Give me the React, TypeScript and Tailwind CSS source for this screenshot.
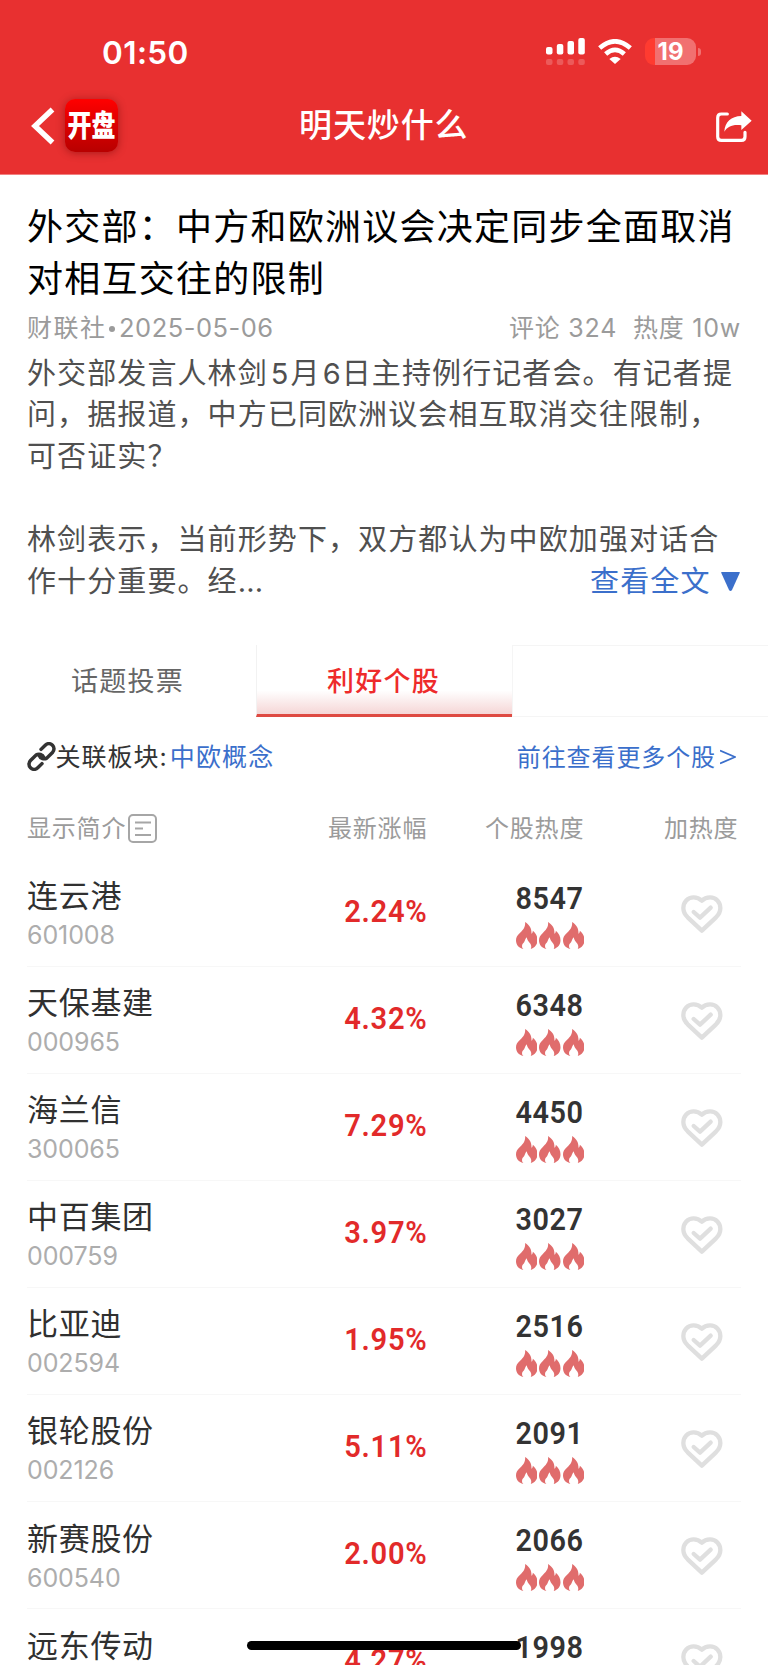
import React from "react";

type Stock = { name: string; code: string; change: string; heat: string };

const stocks: Stock[] = [
  { name: "连云港", code: "601008", change: "2.24%", heat: "8547" },
  { name: "天保基建", code: "000965", change: "4.32%", heat: "6348" },
  { name: "海兰信", code: "300065", change: "7.29%", heat: "4450" },
  { name: "中百集团", code: "000759", change: "3.97%", heat: "3027" },
  { name: "比亚迪", code: "002594", change: "1.95%", heat: "2516" },
  { name: "银轮股份", code: "002126", change: "5.11%", heat: "2091" },
  { name: "新赛股份", code: "600540", change: "2.00%", heat: "2066" },
  { name: "远东传动", code: "", change: "4.27%", heat: "1998" },
];

function Flame() {
  return (
    <svg viewBox="0 0 64 80" className="h-[27px] w-[21.5px]" fill="#e06c6c">
      <path d="M27 0C41 9 47 20 46 35C49 33 50 30 50 26C59 33 64 43 64 54C64 66 57 76 44 80C47 73 45 67 41 62C37 57 33 53 32 45C27 50 27 55 24 60C20 65 18 66 18 71C18 75 19 77 22 80C8 77 0 67 0 54C0 46 4 40 10 34C19 25 29 16 27 0Z" />
    </svg>
  );
}

function HeartCheck() {
  return (
    <svg viewBox="0 0 125 114" className="h-[38px] w-[41.7px]" fill="none" stroke="#dfdfdf" strokeWidth="13" strokeLinecap="round" strokeLinejoin="round">
      <path d="M62.5 17C54 9 46 7 38 7C20 7 7 21 7 39C7 50 12 59 20 67L62.5 107L105 67C113 59 118 50 118 39C118 21 105 7 87 7C78 7 70 9 62.5 17Z" />
      <path d="M38 51L57 68L89 38" />
    </svg>
  );
}

function StatusBar() {
  return (
    <div className="flex h-[84px] items-start justify-between pl-[102px] pr-[67px]">
      <span className="mt-[33px] text-[31.5px] font-[560] leading-[40px] tracking-[0.4px]">01:50</span>
      <div className="mt-[38px] flex h-[27px] items-start">
        <svg viewBox="0 0 39 27" className="h-[27px] w-[39px]" fill="#fff">
          <rect x="0" y="9" width="6.5" height="7.5" rx="2" />
          <rect x="10.8" y="6" width="6.5" height="10.5" rx="2" />
          <rect x="21.5" y="3" width="6.5" height="13.5" rx="2" />
          <rect x="32.3" y="0" width="6.5" height="16.5" rx="2" />
          <g opacity=".2">
            <rect x="0" y="21" width="6.5" height="6" rx="2" />
            <rect x="10.8" y="21" width="6.5" height="6" rx="2" />
            <rect x="21.5" y="21" width="6.5" height="6" rx="2" />
            <rect x="32.3" y="21" width="6.5" height="6" rx="2" />
          </g>
        </svg>
        <svg viewBox="0 0 102 75" className="ml-[13.5px] mt-px h-[25px] w-[34px]" fill="none" stroke="#fff" strokeWidth="14">
          <path d="M5 27Q51 -13 97 27" />
          <path d="M23 45Q51 20 79 45" />
          <path d="M34 60Q51 46 68 60L51 75Z" fill="#fff" stroke="none" />
        </svg>
        <div className="ml-[13px] flex h-[27px] w-[51px] items-center justify-center rounded-[9px] bg-[linear-gradient(90deg,#ff3b30_0_10px,#f17070_10px)] text-[24px] font-bold leading-[27px]">19</div>
        <div className="ml-[2px] mt-[9.5px] h-[8px] w-[3px] rounded-r-full bg-[#f17070]" />
      </div>
    </div>
  );
}

function NavBar() {
  return (
    <div className="flex h-[90px] items-start pl-[31px] pr-[16px]">
      <div className="flex w-[268px]">
        <svg viewBox="0 0 24 38" className="mt-[22.5px] h-[38px] w-[24px]" fill="none" stroke="#fff" strokeWidth="5.4">
          <path d="M21.5 2.5L4 19L21.5 35.5" />
        </svg>
        <div className="ml-[10px] mt-[15px] flex h-[53px] w-[53px] items-center justify-center rounded-[10px] bg-linear-to-b from-[#ff0000] to-[#b80000] shadow-[0_1px_8px_rgba(90,0,0,0.45)]">
          <span className="scale-y-[1.22] text-[24px] font-black leading-[30px]">开盘</span>
        </div>
      </div>
      <h1 className="mt-[17px] grow text-[33px] font-medium leading-[48px] tracking-[0.9px]">明天炒什么</h1>
      <svg viewBox="0 0 107 94" className="mt-[27px] h-[31.3px] w-[35.7px]" fill="none">
        <path d="M34 9H16Q5 9 5 20V77Q5 88 16 88H76Q87 88 87 77V64" stroke="#fff" strokeWidth="9.5" strokeLinecap="round" />
        <path d="M76 1L107 29L76 57V43C52 39 34 46 25 62C26 34 46 15 76 15Z" fill="#fff" />
      </svg>
    </div>
  );
}

function Article() {
  return (
    <section className="h-[470px] pl-[27px] pr-[27px] pt-[25.5px]">
      <h2 className="whitespace-nowrap text-[36px] leading-[52px] tracking-[1.25px] text-black">
        外交部：中方和欧洲议会决定同步全面取消
        <br />
        对相互交往的限制
      </h2>
      <div className="flex h-[48px] items-center justify-between whitespace-nowrap text-[25px] text-[#9b9b9b]">
        <div className="flex items-center">
          <span className="tracking-[1.5px]">财联社</span>
          <span className="ml-[2.5px] mr-[4px] size-[6px] rounded-full bg-[#9b9b9b]" />
          <span className="text-[25.5px] tracking-[0.5px]">2025-05-06</span>
        </div>
        <div className="flex tracking-[0.75px]">
          <span>评论 324</span>
          <span className="ml-[16px]">热度 10w</span>
        </div>
      </div>
      <div className="whitespace-nowrap text-[29px] leading-[41.7px] tracking-[1.1px] text-[#505050]">
        <p>
          外交部发言人林剑<span className="ml-[3px] mr-[1px]">5</span>月<span className="ml-[2px]">6</span>日主持例行记者会。有记者提
        </p>
        <p>问，据报道，中方已同欧洲议会相互取消交往限制，</p>
        <p>可否证实？</p>
        <p>&nbsp;</p>
        <p>林剑表示，当前形势下，双方都认为中欧加强对话合</p>
        <div className="flex justify-between">
          <p>作十分重要。经<span className="tracking-[0.2px]">...</span></p>
          <a className="flex items-start text-[#3b6fcb]">
            查看全文
            <svg viewBox="0 0 19 19" className="ml-[10px] mr-[1.5px] mt-[11px] size-[19px]" fill="#3b6fcb">
              <path d="M0.5 0H18.5Q19 0 18.7 1L11 18Q9.5 20 8 18L0.3 1Q0 0 0.5 0Z" />
            </svg>
          </a>
        </div>
      </div>
    </section>
  );
}

function Tabs() {
  return (
    <div className="grid h-[72px] grid-cols-3 grid-rows-[72px] text-center text-[27px] leading-[74px] tracking-[1.3px]">
      <div className="pr-px text-[#666666]">话题投票</div>
      <div className="border-b-[3px] border-l border-b-[#de4a42] border-l-[#f2f2f2] bg-[linear-gradient(180deg,#fff_66%,#f5d6d6_100%)] pr-[2px] font-medium text-[#ee2b2b]">
        利好个股
      </div>
      <div className="border-y border-l border-[#f5f5f5]" />
    </div>
  );
}

function LinkIcon() {
  return (
    <svg viewBox="0 0 24 24" className="h-[29px] w-[29px]" fill="none" stroke="#333" strokeWidth="2.9" strokeLinecap="round">
      <path d="M10.1 11.2a4.3 4.3 0 0 0 6.4 2l4.6-4.6a4.2 4.2 0 0 0-6-6l-3.5 3.5" />
      <path d="M13.9 12.8a4.3 4.3 0 0 0-6.4-2l-4.6 4.6a4.2 4.2 0 0 0 6 6l3.500-3.500" />
    </svg>
  );
}

function RelatedRow() {
  return (
    <div className="flex h-[77.5px] items-center justify-between whitespace-nowrap pl-[26.5px] pr-[32px] pt-[1px]">
      <div className="flex items-center text-[25px] tracking-[1px] text-[#333]">
        <LinkIcon />
        <span className="mt-[3px]">关联板块:</span>
        <span className="ml-[2px] mt-[3px] tracking-[1.2px] text-[#3b6fcb]">中欧概念</span>
      </div>
      <a className="flex items-center text-[24px] tracking-[0.9px] text-[#3b6fcb]">
        <span className="mt-[3px]">前往查看更多个股</span>
        <svg viewBox="0 0 16 16" className="ml-[4px] mt-[2px] size-[16px]" fill="none" stroke="#3b6fcb" strokeWidth="1.8">
          <path d="M0 1.500L15 8L0 14.500" />
        </svg>
      </a>
    </div>
  );
}

function StockTable() {
  return (
    <section className="pl-[27px] pr-[27px]">
      <div className="flex h-[65px] whitespace-nowrap pt-[18.5px] text-[24px] leading-[32px] tracking-[0.8px] text-[#9b9b9b]">
        <div className="flex w-[301px]">
          显示简介
          <svg viewBox="0 0 29 29" className="ml-[1.5px] mt-[1px] size-[29px]" fill="none" stroke="#a6a6a6" strokeWidth="2">
            <rect x="1" y="1" width="27" height="27" rx="4" />
            <path d="M7 8.500H23M7 14.500H15M7 21H23" />
          </svg>
        </div>
        <div className="w-[157px]">最新涨幅</div>
        <div className="w-[179px]">个股热度</div>
        <div>加热度</div>
      </div>
      {stocks.map((s) => (
        <div key={s.name} className="flex h-[107.1px] border-b border-[#f7f7f7]">
          <div className="w-[270px] pt-[14.5px]">
            <div className="text-[31px] leading-[44px] tracking-[0.7px] text-[#303030]">{s.name}</div>
            <div className="h-[36px] text-[25px] leading-[35px] tracking-[-0.1px] text-[#adadad]">{s.code}</div>
          </div>
          <div className="w-[131px] pt-[31px] text-right font-['Roboto'] text-[32px] font-semibold leading-[40px] text-[#e22a2a]">
            <span className="inline-block origin-right scale-x-[0.91] tracking-[0.8px]">{s.change}</span>
          </div>
          <div className="w-[156px] pt-[18px]">
            <div className="text-right font-['Roboto'] text-[32px] font-semibold leading-[40px] text-[#333]">
              <span className="inline-block origin-right scale-x-[0.9] tracking-[0.6px]">{s.heat}</span>
            </div>
            <div className="mt-[4px] flex justify-end gap-[1.8px]">
              <Flame />
              <Flame />
              <Flame />
            </div>
          </div>
          <div className="ml-[97px] pt-[35px]">
            <HeartCheck />
          </div>
        </div>
      ))}
    </section>
  );
}

export default function App() {
  return (
    <main className="relative h-[1665px] w-[768px] overflow-hidden bg-white font-['Inter','Noto_Sans_CJK_SC',sans-serif]">
      <header className="h-[175px] border-b border-[#f28080] bg-[#e83030] text-white">
        <StatusBar />
        <NavBar />
      </header>
      <Article />
      <Tabs />
      <RelatedRow />
      <StockTable />
      <div className="absolute left-[246.5px] top-[1641px] h-[9px] w-[274.5px] rounded-full bg-black" />
    </main>
  );
}
